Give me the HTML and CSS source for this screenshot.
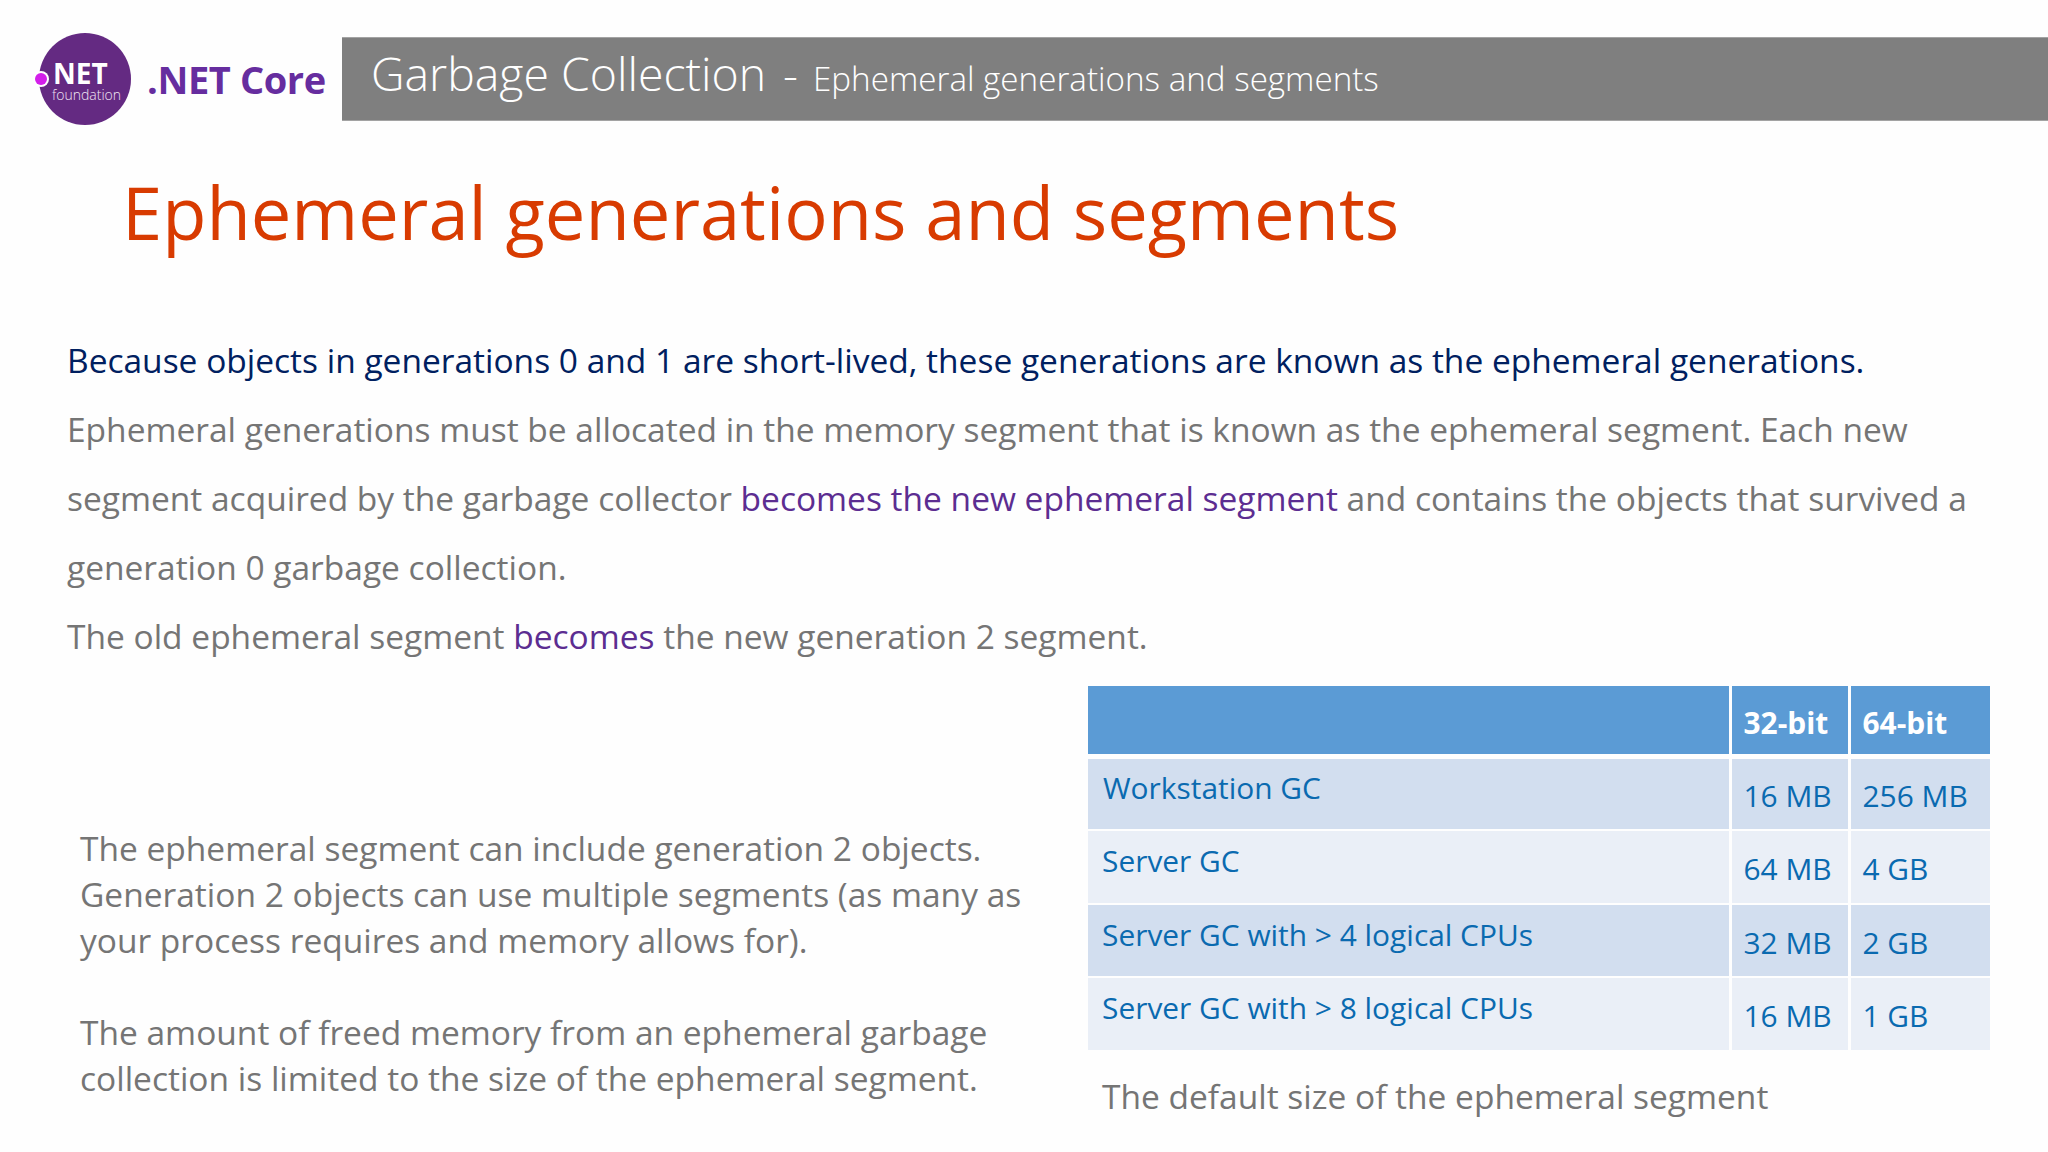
FILE: index.html
```html
<!DOCTYPE html>
<html lang="en">
<head>
<meta charset="utf-8">
<title>Ephemeral generations and segments</title>
<link rel="stylesheet" href="styles.css">
</head>
<body>
<header class="top">
  <div class="brand">
    <svg class="logo" width="110" height="100" viewBox="0 0 110 100" aria-label=".NET foundation">
      <ellipse cx="52" cy="47" rx="46" ry="46" fill="#642a82"/>
      <circle cx="8" cy="47" r="8" fill="#fff"/>
      <circle cx="8" cy="47" r="6" fill="#d31fea"/>
      <text x="20" y="52" class="logo-net">NET</text>
      <text x="19" y="68" class="logo-foundation">foundation</text>
    </svg>
    <span class="brand-name">.NET Core</span>
  </div>
  <div class="bar"><span class="bar-main">Garbage Collection</span><span class="bar-main bar-dash">-</span><span class="bar-sub">Ephemeral generations and segments</span></div>
</header>
<main>
  <h1>Ephemeral generations and segments</h1>
  <p class="line lead">Because objects in generations 0 and 1 are short-lived, these generations are known as the ephemeral generations.</p>
  <p class="line">Ephemeral generations must be allocated in the memory segment that is known as the ephemeral segment. Each new<br>segment acquired by the garbage collector <em>becomes the new ephemeral segment</em> and contains the objects that survived a<br>generation 0 garbage collection.</p>
  <p class="line">The old ephemeral segment <em>becomes</em> the new generation 2 segment.</p>
  <section class="lower">
    <div class="notes">
      <p>The ephemeral segment can include generation 2 objects.<br>Generation 2 objects can use multiple segments (as many as<br>your process requires and memory allows for).</p>
      <p>The amount of freed memory from an ephemeral garbage<br>collection is limited to the size of the ephemeral segment.</p>
    </div>
    <div class="figure">
      <table>
        <thead>
          <tr><th class="c1"></th><th class="c2">32-bit</th><th class="c3">64-bit</th></tr>
        </thead>
        <tbody>
          <tr class="odd r1"><td class="name">Workstation GC</td><td>16 MB</td><td>256 MB</td></tr>
          <tr class="even r2"><td class="name">Server GC</td><td>64 MB</td><td>4 GB</td></tr>
          <tr class="odd r3"><td class="name">Server GC with &gt; 4 logical CPUs</td><td>32 MB</td><td>2 GB</td></tr>
          <tr class="even r4"><td class="name">Server GC with &gt; 8 logical CPUs</td><td>16 MB</td><td>1 GB</td></tr>
        </tbody>
      </table>
      <p class="caption">The default size of the ephemeral segment</p>
    </div>
  </section>
</main>
</body>
</html>
```
FILE: styles.css
```css
* { box-sizing: border-box; }
html, body { margin: 0; padding: 0; }
body {
  width: 2048px;
  height: 1152px;
  overflow: hidden;
  background: #fefefe;
  font-family: "Open Sans", "Noto Sans", sans-serif;
  color: #757575;
}
.top {
  display: flex;
  align-items: flex-start;
  height: 121px;
  padding-top: 32px;
}
.brand {
  display: flex;
  align-items: center;
  width: 342px;
  height: 100px;
  padding-left: 33px;
}
.logo { flex: none; margin-right: 4px; }
.logo-net { font: 700 28px "Open Sans", sans-serif; fill: #fff; }
.logo-foundation { font: 300 14px "Open Sans", sans-serif; fill: #f0e6f5; }
.brand-name {
  font-size: 38px;
  font-weight: 700;
  color: #662d9f;
  letter-spacing: -0.4px;
  white-space: nowrap;
  margin-top: -6px;
}
.bar {
  flex: 1;
  height: 84px;
  margin-top: 5px;
  padding-left: 29px;
  background: #7f7f7f;
  border-top: 1px solid #a3a3a3;
  border-bottom: 1px solid #a3a3a3;
  color: #fff;
  line-height: 70px;
  white-space: nowrap;
}
.bar-main { font-size: 46.4px; font-weight: 300; }
.bar-dash { margin: 0 15px 0 17px; }
.bar-sub { font-size: 33.2px; font-weight: 300; }
main { padding: 0 0 0 67px; }
h1 {
  margin: 0 0 34px 55px;
  height: 171px;
  padding-top: 41px;
  font-size: 72.3px;
  font-weight: 400;
  line-height: 100px;
  color: #d83b01;
  white-space: nowrap;
}
.line {
  margin: 0;
  font-size: 33.5px;
  line-height: 69px;
  white-space: nowrap;
}
.lead { color: #002060; }
em { font-style: normal; color: #5c2d91; }
.lower {
  display: flex;
  align-items: flex-start;
  margin-top: 15px;
}
.notes {
  width: 1021px;
  padding: 139px 0 0 13px;
  font-size: 33.5px;
  line-height: 46px;
  white-space: nowrap;
}
.notes p { margin: 0 0 46px; }
table {
  width: 902px;
  border-collapse: collapse;
  table-layout: fixed;
  font-size: 29.9px;
  color: #0a6ab0;
}
th, td { border: 3px solid #fefefe; padding: 0 12px; text-align: left; white-space: nowrap; }
th, td { border-top-width: 2px; border-bottom-width: 2px; }
tr > :first-child { border-left: 0; }
tr > :last-child { border-right: 0; }
thead tr:first-child th { border-top: 0; }
th { background: #5b9bd5; color: #fff; font-weight: 700; padding-top: 6px; }
thead th { border-bottom-width: 5px; height: 70px; }
.c1 { width: 642px; }
.c2 { width: 119px; }
.c3 { width: 141px; }
tbody td { height: 73.8px; padding-top: 4px; line-height: 1; }
.odd td { background: #d2deef; }
.even td { background: #eaeff7; }
td.name { padding-left: 15px; padding-top: 0; padding-bottom: 12px; }
.even td.name, .r3 td.name { padding-left: 14px; }
.caption {
  margin: 21px 0 0 14px;
  font-size: 33.5px;
  line-height: 46px;
  white-space: nowrap;
}
```
